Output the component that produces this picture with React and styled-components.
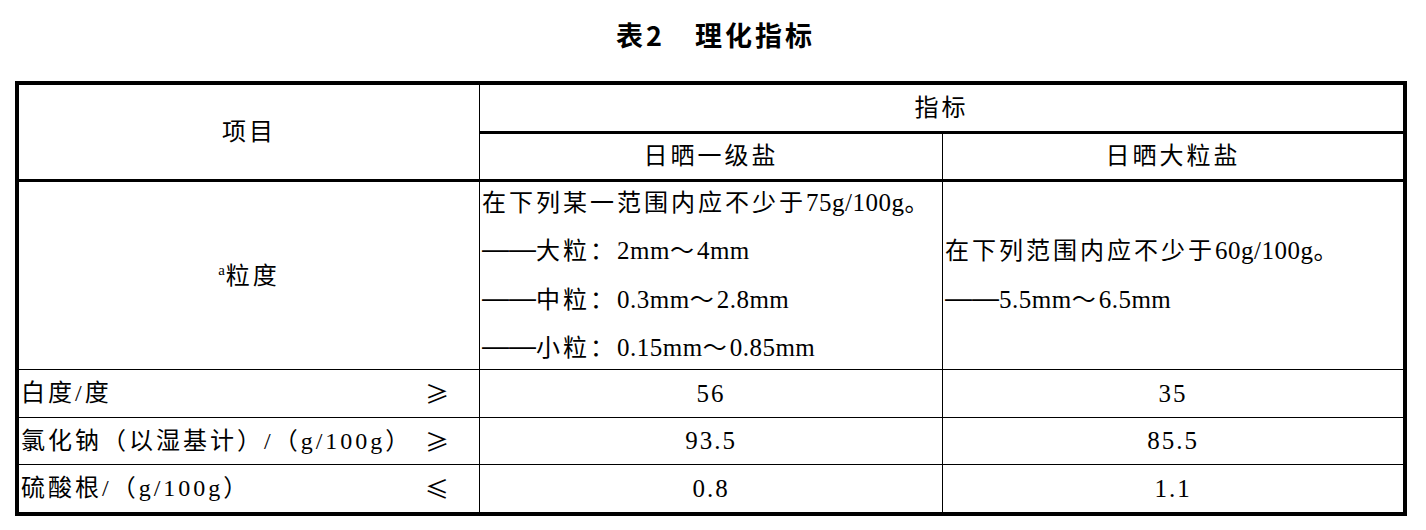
import React from 'react';
import styled, { createGlobalStyle } from 'styled-components';

// ----------------------------------------------------------------------
const GlobalStyle = createGlobalStyle`
  html, body {
    margin: 0;
    padding: 0;
    background: #ffffff;
  }
  body {
    font-family: "Liberation Serif", "Noto Sans CJK SC", serif;
    color: #000000;
  }
`;

const simpleRows = [
  { name: '白度/度', sign: '≥', first: '56', second: '35' },
  { name: '氯化钠（以湿基计）/（g/100g）', sign: '≥', first: '93.5', second: '85.5' },
  { name: '硫酸根/（g/100g）', sign: '≤', first: '0.8', second: '1.1' },
];

export default function App() {
  return (
    <Page>
      <GlobalStyle />
      <Title>表2　理化指标</Title>
      <Table>
        <Cell $rows={2} $bottom={3}>项目</Cell>
        <Cell $cols={2} $bottom={3} $edge>指标</Cell>
        <Cell $bottom={3}>日晒一级盐</Cell>
        <Cell $bottom={3} $edge>日晒大粒盐</Cell>

        <Cell>
          <span>
            <Sup>a</Sup>粒度
          </span>
        </Cell>
        <Cell $left>
          <Lines>
            <Line>
              在下列某一范围内应不少于<Num>75g/100g</Num>。
            </Line>
            <Line>
              <Dash>——</Dash>大粒：<Num>2mm</Num>～<Num>4mm</Num>
            </Line>
            <Line>
              <Dash>——</Dash>中粒：<Num>0.3mm</Num>～<Num>2.8mm</Num>
            </Line>
            <Line>
              <Dash>——</Dash>小粒：<Num>0.15mm</Num>～<Num>0.85mm</Num>
            </Line>
          </Lines>
        </Cell>
        <Cell $left $edge>
          <Lines>
            <Line>
              在下列范围内应不少于<Num>60g/100g</Num>。
            </Line>
            <Line>
              <Dash>——</Dash>
              <Num>5.5mm</Num>～<Num>6.5mm</Num>
            </Line>
          </Lines>
        </Cell>

        {simpleRows.map((row, i) => {
          const bottom = i === simpleRows.length - 1 ? 0 : 1;
          return (
            <React.Fragment key={row.name}>
              <ItemCell $bottom={bottom}>
                <span>{row.name}</span>
                <Sign>{row.sign}</Sign>
              </ItemCell>
              <Cell $bottom={bottom}>
                <Value>{row.first}</Value>
              </Cell>
              <Cell $bottom={bottom} $edge>
                <Value>{row.second}</Value>
              </Cell>
            </React.Fragment>
          );
        })}
      </Table>
    </Page>
  );
}

// ----------------------------------------------------------------------
const Page = styled.div`
  width: 1426px;
  padding-left: 15px;
  box-sizing: border-box;
`;
const Title = styled.h1`
  margin: 0 0 11px 0;
  height: 70px;
  line-height: 70px;
  text-align: center;
  font-family: "Noto Sans CJK SC", sans-serif;
  font-weight: 700;
  font-size: 27px;
  letter-spacing: 3px;
  padding-right: 10px;
`;
const Table = styled.div`
  display: grid;
  grid-template-columns: 461px 463px 460px;
  grid-template-rows: 49px 48px 188px 48px 47px 47px;
  width: 1384px;
  border: 4px solid #000000;
  font-size: 24px;
  letter-spacing: 3px;
  line-height: 1.2;
`;
const Cell = styled.div`
  display: flex;
  align-items: center;
  justify-content: ${(p) => (p.$left ? 'flex-start' : 'center')};
  grid-row: span ${(p) => p.$rows || 1};
  grid-column: span ${(p) => p.$cols || 1};
  padding: 0 2px;
  box-sizing: border-box;
  border-right: ${(p) => (p.$edge ? '0' : '1px solid #000000')};
  border-bottom: ${(p) => (p.$bottom === undefined ? 1 : p.$bottom)}px solid #000000;
  white-space: nowrap;
  min-width: 0;
`;
const ItemCell = styled(Cell)`
  justify-content: space-between;
  padding-right: 30px;
`;
const Sign = styled.span`
  font-family: "Noto Sans CJK SC", sans-serif;
  letter-spacing: 0;
`;
const Lines = styled.div`
  display: flex;
  flex-direction: column;
`;
const Line = styled.div`
  line-height: 46.5px;
`;
const Dash = styled.span`
  font-family: "Liberation Sans", sans-serif;
  font-size: 27px;
  letter-spacing: 0;
  vertical-align: 1px;
`;
const Num = styled.span`
  font-size: 25px;
  letter-spacing: 0.5px;
`;
const Value = styled(Num)`
  letter-spacing: 2px;
`;
const Sup = styled.sup`
  font-size: 15px;
  letter-spacing: 0;
  vertical-align: 9px;
  margin-right: 1px;
`;
